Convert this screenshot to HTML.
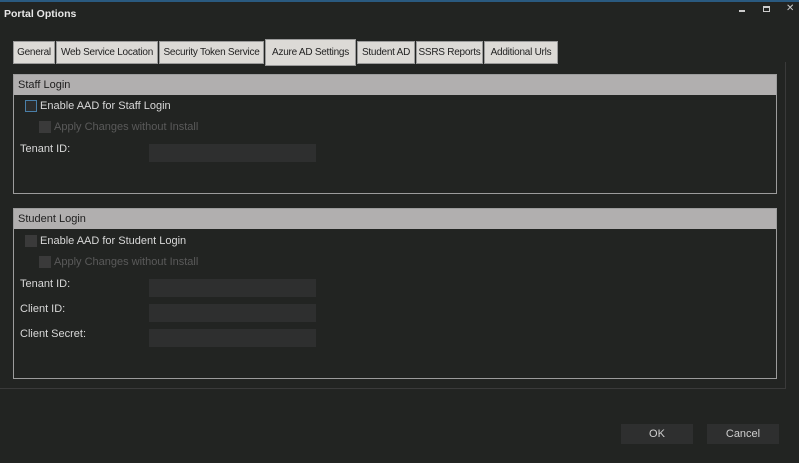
<!DOCTYPE html>
<html><head><style>
*{margin:0;padding:0;box-sizing:border-box}
body{width:799px;height:463px;background:#222422;font-family:"Liberation Sans",sans-serif;font-size:11px;color:#d8d8d8;position:relative;overflow:hidden;white-space:nowrap}
.a{position:absolute}
.tab{position:absolute;top:41px;height:23px;background:#dcdad6;border:1px solid #9a9a9a;color:#222;line-height:21px;text-align:center;font-size:10px;letter-spacing:-0.25px;white-space:nowrap;overflow:hidden}
.grp{position:absolute;left:13px;width:764px;border:1px solid #9c9c9c}
.hdr{height:20px;background:#b1afaf;color:#1e1e1e;padding-left:4px;line-height:20px}
.cb{position:absolute;width:12px;height:12px;background:#3a3a3a}
.fld{position:absolute;left:149px;width:167px;height:18px;background:#2e2f2f}
.lbl{position:absolute;left:20px}
.btn{position:absolute;top:424px;width:72px;height:20px;background:#2e2f2f;text-align:center;line-height:20px;color:#cfcfcf}
</style></head><body>
<div class="a" style="left:0;top:0;width:799px;height:2px;background:#2a5a80"></div>
<div class="a" style="left:4px;top:8px;font-weight:bold;color:#e8e8e8;font-size:10.5px">Portal Options</div>
<div class="a" style="left:739px;top:10px;width:6px;height:2px;background:#ccc"></div>
<div class="a" style="left:763px;top:6px;width:7px;height:6px;border:1px solid #ccc;border-top-width:2px"></div>
<div class="a" style="left:786px;top:3px;color:#ccc;font-size:10px">✕</div>
<div class="tab" style="left:13px;width:42px">General</div>
<div class="tab" style="left:56px;width:102px">Web Service Location</div>
<div class="tab" style="left:159px;width:105px">Security Token Service</div>
<div class="tab" style="left:265px;width:91px;top:39px;height:27px;line-height:25px">Azure AD Settings</div>
<div class="tab" style="left:357px;width:58px">Student AD</div>
<div class="tab" style="left:416px;width:67px">SSRS Reports</div>
<div class="tab" style="left:484px;width:74px">Additional Urls</div>
<div class="a" style="left:785px;top:62px;width:1px;height:327px;background:#3a3a3a"></div>
<div class="a" style="left:0;top:388px;width:786px;height:1px;background:#3a3a3a"></div>
<div class="grp" style="top:74px;height:120px"><div class="hdr">Staff Login</div></div>
<div class="cb" style="left:25px;top:100px;border:1px solid #4a7fa8;background:#2c2d2d"></div>
<div class="a" style="left:40px;top:100px">Enable AAD for Staff Login</div>
<div class="cb" style="left:39px;top:121px"></div>
<div class="a" style="left:54px;top:121px;color:#5a5a5a">Apply Changes without Install</div>
<div class="lbl" style="top:143px">Tenant ID:</div>
<div class="fld" style="top:144px"></div>
<div class="grp" style="top:208px;height:171px"><div class="hdr">Student Login</div></div>
<div class="cb" style="left:25px;top:235px"></div>
<div class="a" style="left:40px;top:235px">Enable AAD for Student Login</div>
<div class="cb" style="left:39px;top:256px"></div>
<div class="a" style="left:54px;top:256px;color:#5a5a5a">Apply Changes without Install</div>
<div class="lbl" style="top:278px">Tenant ID:</div><div class="fld" style="top:279px"></div>
<div class="lbl" style="top:303px">Client ID:</div><div class="fld" style="top:304px"></div>
<div class="lbl" style="top:328px">Client Secret:</div><div class="fld" style="top:329px"></div>
<div class="btn" style="left:621px">OK</div>
<div class="btn" style="left:707px">Cancel</div>
</body></html>
